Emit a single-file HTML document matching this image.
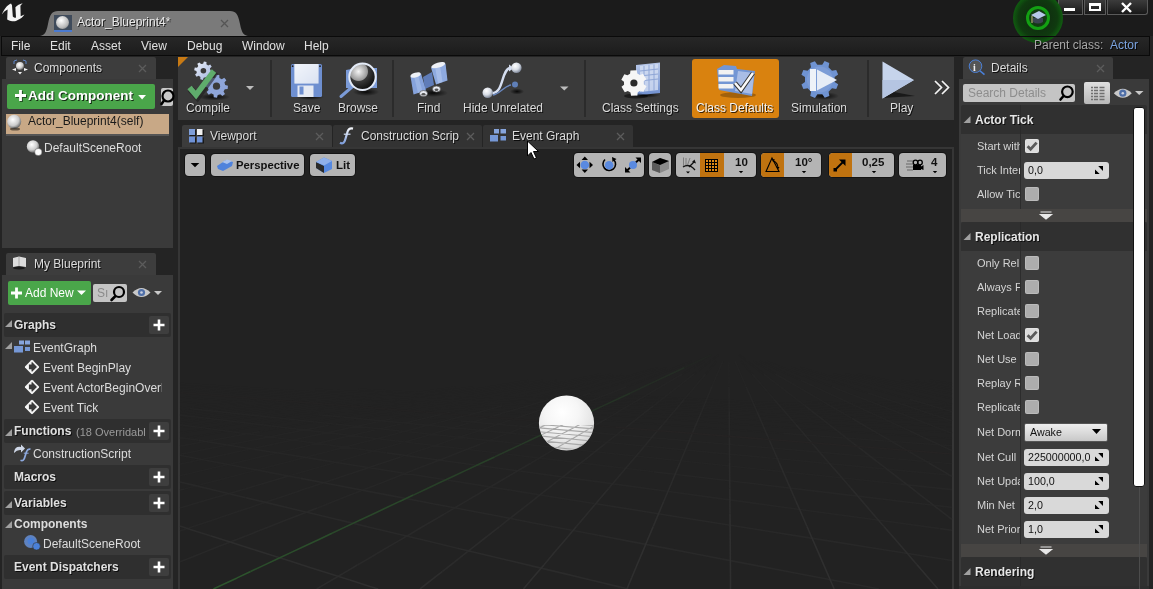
<!DOCTYPE html>
<html><head><meta charset="utf-8">
<style>
*{margin:0;padding:0;box-sizing:border-box}
html,body{width:1153px;height:589px;overflow:hidden;background:#242424;font-family:"Liberation Sans",sans-serif;font-size:12px;color:#d8d8d8}
.a{position:absolute}
.t{position:absolute;white-space:nowrap;line-height:14px;will-change:transform}
.sh{text-shadow:1px 1px 0 rgba(0,0,0,.75)}
b{font-weight:bold}
</style></head><body>
<div class="a" style="left:0px;top:0px;width:1153px;height:36px;background:#1b1b1b"></div>
<svg class="a" style="left:0px;top:0px;" width="28" height="26" viewBox="0 0 28 26"><path d="M1.8 14.6 C4 9.5 7 5 11 3.5 L12 5.2 L12.8 16.6 C13.6 17.8 15 17.9 16 17.4 L15.4 7.2 C17 5.6 19.8 4 22.6 3.3 L20.4 5.8 L20.7 16.3 L24.4 14.6 C22.5 17.5 20.5 19 17.8 20 C15.5 21.6 12.5 22.2 7.2 19.4 L7.6 9.4 C5.2 10.4 3.4 12.2 1.8 14.6Z" fill="#f4f4f4"/></svg>
<svg class="a" style="left:38px;top:10px;" width="212" height="27" viewBox="0 0 212 27"><path d="M0 26 C6 26 8 24 10 14 C12 4 14 1 20 1 L192 1 C198 1 200 4 202 14 C204 24 206 26 212 26 Z" fill="#7a7a7a"/></svg>
<div class="a" style="left:54px;top:15px;width:18px;height:17px;background:#3f4b5b;border-bottom:2px solid #4a7ad0"></div>
<div class="a" style="left:56px;top:16px;width:13px;height:13px;border-radius:50%;background:radial-gradient(circle at 40% 35%,#fff,#bbb 60%,#666)"></div>
<div class="t sh" style="left:77px;top:15px;color:#e8e8e8">Actor_Blueprint4*</div>
<svg class="a" style="left:220px;top:19px;" width="9" height="9" viewBox="0 0 9 9"><path d="M1 1 L8 8 M8 1 L1 8" stroke="#555" stroke-width="1.3"/></svg>
<div class="a" style="left:1058px;top:0px;width:25px;height:15px;background:linear-gradient(#3c3c3c,#181818);border:1px solid #5a5a5a;border-top:none;border-radius:0 0 0 3px"></div>
<div class="a" style="left:1064px;top:8px;width:11px;height:3px;background:#fff"></div>
<div class="a" style="left:1084px;top:0px;width:22px;height:15px;background:linear-gradient(#3c3c3c,#181818);border:1px solid #5a5a5a;border-top:none"></div>
<div class="a" style="left:1089px;top:3px;width:12px;height:8px;border:2px solid #fff;border-top-width:3px"></div>
<div class="a" style="left:1107px;top:0px;width:41px;height:15px;background:linear-gradient(#3c3c3c,#181818);border:1px solid #5a5a5a;border-top:none;border-radius:0 0 3px 0"></div>
<svg class="a" style="left:1120px;top:2px;" width="13" height="11" viewBox="0 0 13 11"><path d="M2 1 L11 10 M11 1 L2 10" stroke="#fff" stroke-width="2.4"/></svg>
<div class="a" style="left:1px;top:36px;width:1149px;height:20px;background:linear-gradient(#272727,#1c1c1c);border:1px solid #0a0a0a"></div>
<div class="t" style="left:11px;top:39px;color:#e0e0e0">File</div>
<div class="t" style="left:50px;top:39px;color:#e0e0e0">Edit</div>
<div class="t" style="left:91px;top:39px;color:#e0e0e0">Asset</div>
<div class="t" style="left:141px;top:39px;color:#e0e0e0">View</div>
<div class="t" style="left:187px;top:39px;color:#e0e0e0">Debug</div>
<div class="t" style="left:242px;top:39px;color:#e0e0e0">Window</div>
<div class="t" style="left:304px;top:39px;color:#e0e0e0">Help</div>
<div class="a" style="left:1013px;top:-7px;width:50px;height:50px;border-radius:50%;background:radial-gradient(circle,#102410 0,#0f3a0f 55%,#118a11 92%,#139813 100%)"></div>
<div class="a" style="left:1026px;top:6px;width:24px;height:24px;border-radius:50%;border:3px solid #13a013;background:radial-gradient(circle,#182818,#0f4a0f)"></div>
<svg class="a" style="left:1030px;top:9px;" width="17" height="17" viewBox="0 0 17 17"><path d="M3 9 L3 13 Q8 16 13 13 L13 9Z" fill="#3a4450"/><path d="M1 6 L9 2 L16 6 L8 10Z" fill="#b8c8ea"/><line x1="2" y1="7" x2="2" y2="14" stroke="#d8c090" stroke-width="1"/></svg>
<div class="a" style="left:1013px;top:36px;width:50px;height:1px;background:#0a0a0a"></div>
<div class="t sh" style="left:1034px;top:38px;color:#a8a8a8">Parent class:</div>
<div class="t sh" style="left:1110px;top:38px;color:#7aa3e0">Actor</div>
<div class="a" style="left:0px;top:56px;width:178px;height:533px;background:#242424"></div>
<div class="a" style="left:6px;top:57px;width:150px;height:23px;background:#3d3d3d;border-radius:2px 2px 0 0"></div>
<div class="a" style="left:2px;top:79px;width:171px;height:169px;background:#3a3a3a"></div>
<div class="t sh" style="left:34px;top:61px;color:#dcdcdc">Components</div>
<svg class="a" style="left:138px;top:64px;" width="9" height="9" viewBox="0 0 9 9"><path d="M1 1 L8 8 M8 1 L1 8" stroke="#5c5c5c" stroke-width="1.3"/></svg>
<div class="a" style="left:7px;top:84px;width:148px;height:25px;background:#4aa64a;border-radius:2px"></div>
<div class="t sh" style="left:28px;top:89px;color:#fff;font-weight:bold;font-size:13.5px">Add Component</div>
<div class="a" style="left:161px;top:88px;width:12px;height:18px;background:#c8c8c8;border-radius:2px"></div>
<div class="a" style="left:6px;top:114px;width:163px;height:20px;background:#c8a886"></div>
<div class="a" style="left:6px;top:134px;width:163px;height:2px;background:#555"></div>
<div class="t" style="left:28px;top:114px;color:#1a1a1a">Actor_Blueprint4(self)</div>
<div class="t" style="left:44px;top:141px;color:#dcdcdc">DefaultSceneRoot</div>
<div class="a" style="left:6px;top:253px;width:150px;height:23px;background:#3d3d3d;border-radius:2px 2px 0 0"></div>
<div class="a" style="left:2px;top:275px;width:171px;height:314px;background:#3a3a3a"></div>
<div class="t sh" style="left:34px;top:257px;color:#dcdcdc">My Blueprint</div>
<svg class="a" style="left:138px;top:260px;" width="9" height="9" viewBox="0 0 9 9"><path d="M1 1 L8 8 M8 1 L1 8" stroke="#5c5c5c" stroke-width="1.3"/></svg>
<div class="a" style="left:8px;top:281px;width:83px;height:24px;background:#4aa64a;border-radius:2px"></div>
<div class="t" style="left:25px;top:286px;color:#fff">Add New</div>
<div class="a" style="left:93px;top:284px;width:34px;height:18px;background:#c4c4c4;border-radius:2px"></div>
<div class="t" style="left:97px;top:286px;color:#8a8a8a">Sı</div>
<div class="a" style="left:4px;top:313px;width:167px;height:24px;background:#2f2f2f;border-radius:2px"></div>
<div class="t sh" style="left:14px;top:318px;color:#e0e0e0;font-weight:bold">Graphs</div>
<div class="a" style="left:149px;top:316px;width:20px;height:18px;background:#3e3e3e;border-radius:2px"></div>
<div class="t" style="left:33px;top:341px;color:#dcdcdc">EventGraph</div>
<div class="t" style="left:43px;top:361px;color:#dcdcdc">Event BeginPlay</div>
<div class="t" style="left:43px;top:381px;color:#dcdcdc;width:119px;overflow:hidden">Event ActorBeginOverlap</div>
<div class="t" style="left:43px;top:401px;color:#dcdcdc">Event Tick</div>
<div class="a" style="left:4px;top:419px;width:167px;height:24px;background:#2f2f2f;border-radius:2px"></div>
<div class="t sh" style="left:14px;top:424px;color:#e0e0e0;font-weight:bold">Functions</div>
<div class="a" style="left:149px;top:422px;width:20px;height:18px;background:#3e3e3e;border-radius:2px"></div>
<div class="t" style="left:76px;top:425px;color:#9a9a9a;font-size:11px;width:70px;overflow:hidden">(18 Overridable)</div>
<div class="t" style="left:33px;top:447px;color:#dcdcdc">ConstructionScript</div>
<div class="a" style="left:4px;top:465px;width:167px;height:24px;background:#2f2f2f;border-radius:2px"></div>
<div class="t sh" style="left:14px;top:470px;color:#e0e0e0;font-weight:bold">Macros</div>
<div class="a" style="left:149px;top:468px;width:20px;height:18px;background:#3e3e3e;border-radius:2px"></div>
<div class="a" style="left:4px;top:491px;width:167px;height:24px;background:#2f2f2f;border-radius:2px"></div>
<div class="t sh" style="left:14px;top:496px;color:#e0e0e0;font-weight:bold">Variables</div>
<div class="a" style="left:149px;top:494px;width:20px;height:18px;background:#3e3e3e;border-radius:2px"></div>
<div class="t" style="left:14px;top:517px;color:#dcdcdc;font-weight:bold">Components</div>
<div class="t" style="left:43px;top:537px;color:#dcdcdc">DefaultSceneRoot</div>
<div class="a" style="left:4px;top:555px;width:167px;height:24px;background:#2f2f2f;border-radius:2px"></div>
<div class="t sh" style="left:14px;top:560px;color:#e0e0e0;font-weight:bold">Event Dispatchers</div>
<div class="a" style="left:149px;top:558px;width:20px;height:18px;background:#3e3e3e;border-radius:2px"></div>
<div class="a" style="left:173px;top:56px;width:787px;height:533px;background:#242424"></div>
<div class="a" style="left:178px;top:57px;width:776px;height:63px;background:#3a3a3a"></div>
<svg class="a" style="left:178px;top:57px;" width="11" height="11" viewBox="0 0 11 11"><path d="M0 0 L10 0 L0 10Z" fill="#c87a14"/></svg>
<div class="a" style="left:270px;top:60px;width:2px;height:57px;background:#2b2b2b"></div>
<div class="a" style="left:392px;top:60px;width:2px;height:57px;background:#2b2b2b"></div>
<div class="a" style="left:584px;top:60px;width:2px;height:57px;background:#2b2b2b"></div>
<div class="a" style="left:867px;top:60px;width:2px;height:57px;background:#2b2b2b"></div>
<div class="a" style="left:692px;top:59px;width:87px;height:59px;background:#d9820f;border-radius:3px"></div>
<div class="t sh" style="left:186px;top:101px;color:#dcdcdc">Compile</div>
<div class="t sh" style="left:293px;top:101px;color:#dcdcdc">Save</div>
<div class="t sh" style="left:338px;top:101px;color:#dcdcdc">Browse</div>
<div class="t sh" style="left:417px;top:101px;color:#dcdcdc">Find</div>
<div class="t sh" style="left:463px;top:101px;color:#dcdcdc">Hide Unrelated</div>
<div class="t sh" style="left:602px;top:101px;color:#dcdcdc">Class Settings</div>
<div class="t sh" style="left:696px;top:101px;color:#f4f4f4">Class Defaults</div>
<div class="t sh" style="left:791px;top:101px;color:#dcdcdc">Simulation</div>
<div class="t sh" style="left:890px;top:101px;color:#dcdcdc">Play</div>
<div class="a" style="left:182px;top:125px;width:150px;height:22px;background:#3c3c3c;border-radius:2px 2px 0 0"></div>
<div class="a" style="left:333px;top:125px;width:149px;height:22px;background:#333333;border-radius:2px 2px 0 0"></div>
<div class="a" style="left:483px;top:125px;width:150px;height:22px;background:#333333;border-radius:2px 2px 0 0"></div>
<div class="t sh" style="left:210px;top:129px;color:#dcdcdc">Viewport</div>
<svg class="a" style="left:315px;top:132px;" width="9" height="9" viewBox="0 0 9 9"><path d="M1 1 L8 8 M8 1 L1 8" stroke="#5c5c5c" stroke-width="1.3"/></svg>
<div class="t sh" style="left:361px;top:129px;color:#dcdcdc">Construction Scrip</div>
<svg class="a" style="left:466px;top:132px;" width="9" height="9" viewBox="0 0 9 9"><path d="M1 1 L8 8 M8 1 L1 8" stroke="#5c5c5c" stroke-width="1.3"/></svg>
<div class="t sh" style="left:512px;top:129px;color:#dcdcdc">Event Graph</div>
<svg class="a" style="left:616px;top:132px;" width="9" height="9" viewBox="0 0 9 9"><path d="M1 1 L8 8 M8 1 L1 8" stroke="#5c5c5c" stroke-width="1.3"/></svg>
<div class="a" style="left:178px;top:147px;width:776px;height:442px;background:#363636"></div>
<div class="a" style="left:180px;top:149px;width:772px;height:440px;background:#222222"></div>
<svg class="a" style="left:0;top:0" width="1153" height="589"><defs><clipPath id="sc"><path d="M537.9 425 L595.1 425 L595.1 451.6 L537.9 451.6Z"/></clipPath><clipPath id="sc2"><circle cx="566.5" cy="423" r="27.1"/></clipPath><radialGradient id="gsp" cx="0.42" cy="0.3" r="0.75"><stop offset="0" stop-color="#ffffff"/><stop offset="0.4" stop-color="#f6f6f6"/><stop offset="0.8" stop-color="#e2e2e2"/><stop offset="1" stop-color="#cfcfcf"/></radialGradient></defs><g fill="none" stroke-width="1.6"><path d="M180.0 408.5L199.5 406.3M199.5 406.3L256.5 399.9M180.0 411.5L224.7 406.3M224.7 406.3L279.0 399.8M180.0 414.9L198.3 412.6M198.3 412.6L249.9 406.2M249.9 406.2L301.5 399.8M301.5 399.8L353.2 393.4M180.0 418.7L226.2 412.6M226.2 412.6L275.1 406.2M275.1 406.2L324.0 399.8M324.0 399.8L372.9 393.4M180.0 422.9L207.9 419.0M207.9 419.0L254.1 412.6M254.1 412.6L300.3 406.2M300.3 406.2L346.5 399.8M346.5 399.8L392.7 393.4M180.0 427.6L195.1 425.4M195.1 425.4L238.6 419.0M238.6 419.0L282.1 412.6M282.1 412.6L325.5 406.2M325.5 406.2L369.0 399.8M369.0 399.8L412.5 393.4M412.5 393.4L456.0 387.0M180.0 432.9L187.7 431.7M187.7 431.7L228.5 425.3M228.5 425.3L269.3 418.9M269.3 418.9L310.0 412.5M310.0 412.5L350.8 406.1M350.8 406.1L391.5 399.7M391.5 399.7L432.3 393.3M432.3 393.3L473.0 386.9M185.8 438.1L223.8 431.7M223.8 431.7L261.9 425.3M261.9 425.3L299.9 418.9M299.9 418.9L337.9 412.5M337.9 412.5L376.0 406.1M376.0 406.1L414.0 399.7M414.0 399.7L452.0 393.3M452.0 393.3L490.1 386.9M490.1 386.9L528.1 380.5M259.9 431.6L295.3 425.3M295.3 425.3L330.6 418.9M330.6 418.9L365.9 412.5M365.9 412.5L401.2 406.1M401.2 406.1L436.5 399.7M436.5 399.7L471.8 393.3M471.8 393.3L507.1 386.9M507.1 386.9L542.5 380.5M328.6 425.2L361.2 418.8M361.2 418.8L393.8 412.5M393.8 412.5L426.4 406.1M426.4 406.1L459.0 399.7M459.0 399.7L491.6 393.3M491.6 393.3L524.2 386.9M524.2 386.9L556.8 380.5M391.9 418.8L421.8 412.4M421.8 412.4L451.6 406.0M451.6 406.0L481.5 399.7M481.5 399.7L511.4 393.3M511.4 393.3L541.3 386.9M541.3 386.9L571.1 380.5M571.1 380.5L601.0 374.1M449.7 412.4L476.9 406.0M476.9 406.0L504.0 399.6M504.0 399.6L531.2 393.2M531.2 393.2L558.3 386.9M558.3 386.9L585.5 380.5M585.5 380.5L612.6 374.1M502.1 406.0L526.5 399.6M526.5 399.6L551.0 393.2M551.0 393.2L575.4 386.9M575.4 386.9L599.8 380.5M599.8 380.5L624.3 374.1M549.0 399.6L570.7 393.2M570.7 393.2L592.5 386.8M592.5 386.8L614.2 380.5M614.2 380.5L635.9 374.1M635.9 374.1L657.6 367.7M180.0 407.6L189.9 408.6M590.5 393.2L609.5 386.8M609.5 386.8L628.5 380.4M628.5 380.4L647.5 374.1M647.5 374.1L666.5 367.7M180.0 401.6L187.1 402.3M187.1 402.3L252.9 408.6M252.9 408.6L318.6 414.8M626.6 386.8L642.9 380.4M642.9 380.4L659.1 374.1M659.1 374.1L675.4 367.7M675.4 367.7L691.7 361.3M180.0 396.7L243.6 402.2M243.6 402.2L315.8 408.5M315.8 408.5L388.1 414.8M388.1 414.8L460.4 421.0M682.4 374.0L693.2 367.7M693.2 367.7L704.1 361.3M180.0 389.1L185.5 389.5M185.5 389.5L270.9 395.8M270.9 395.8L356.3 402.1M356.3 402.1L441.7 408.3M441.7 408.3L527.0 414.6M527.0 414.6L612.4 420.9M612.4 420.9L697.8 427.1M697.8 427.1L783.1 433.4M694.0 374.0L702.1 367.7M702.1 367.7L710.2 361.3M710.2 361.3L718.4 354.9M180.0 386.1L228.8 389.5M228.8 389.5L320.7 395.7M320.7 395.7L412.6 402.0M412.6 402.0L504.5 408.2M504.5 408.2L596.4 414.5M596.4 414.5L688.3 420.8M688.3 420.8L780.3 427.0M780.3 427.0L872.2 433.3M872.2 433.3L952.0 438.7M705.7 374.0L716.4 361.3M180.0 383.6L272.0 389.4M272.0 389.4L370.4 395.7M370.4 395.7L468.9 401.9M468.9 401.9L567.3 408.2M567.3 408.2L665.8 414.4M665.8 414.4L764.3 420.7M764.3 420.7L862.7 426.9M862.7 426.9L952.0 432.6M315.2 389.4L420.2 395.6M420.2 395.6L525.2 401.8M525.2 401.8L630.2 408.1M630.2 408.1L735.1 414.3M735.1 414.3L840.1 420.6M840.1 420.6L945.1 426.8M945.1 426.8L952.0 427.2M358.3 389.3L469.8 395.5M469.8 395.5L581.4 401.8M581.4 401.8L692.9 408.0M692.9 408.0L804.5 414.3M804.5 414.3L916.0 420.5M916.0 420.5L952.0 422.5M519.5 395.5L637.6 401.7M637.6 401.7L755.7 407.9M755.7 407.9L873.8 414.2M873.8 414.2L952.0 418.3M752.2 374.0L741.2 361.3M569.1 395.4L693.8 401.6M693.8 401.6L818.4 407.9M818.4 407.9L943.0 414.1M943.0 414.1L952.0 414.5M763.8 374.0L755.6 367.6M755.6 367.6L747.4 361.3M747.4 361.3L739.2 354.9M618.7 395.3L749.9 401.6M749.9 401.6L881.1 407.8M881.1 407.8L952.0 411.2M775.5 374.0L764.5 367.6M764.5 367.6L753.6 361.3M806.0 401.5L943.7 407.7M943.7 407.7L952.0 408.1M800.7 380.3L787.1 373.9M787.1 373.9L773.5 367.6M773.5 367.6L759.8 361.3M862.1 401.4L952.0 405.3M831.5 386.6L815.1 380.3M815.1 380.3L798.7 373.9M798.7 373.9L782.4 367.6M782.4 367.6L766.0 361.3M867.6 392.9L848.6 386.6M848.6 386.6L829.5 380.3M829.5 380.3L810.4 373.9M810.4 373.9L791.3 367.6M909.3 399.3L887.4 392.9M887.4 392.9L865.6 386.6M865.6 386.6L843.8 380.3M843.8 380.3L822.0 373.9M822.0 373.9L800.2 367.6M952.0 404.5L931.8 399.2M931.8 399.2L907.2 392.9M907.2 392.9L882.7 386.6M882.7 386.6L858.2 380.2M858.2 380.2L833.7 373.9M952.0 398.7L927.1 392.9M927.1 392.9L899.8 386.6M899.8 386.6L872.6 380.2M872.6 380.2L845.3 373.9M952.0 394.0L946.9 392.9M946.9 392.9L916.9 386.5M916.9 386.5L886.9 380.2M886.9 380.2L857.0 373.9M952.0 390.0L934.0 386.5M934.0 386.5L901.3 380.2M952.0 386.7L951.1 386.5M951.1 386.5L915.7 380.2M952.0 383.8L930.0 380.2" stroke="#222222"/><path d="M180.0 439.1L185.8 438.1M180.0 446.1L189.3 444.4M189.3 444.4L224.6 438.0M224.6 438.0L259.9 431.6M180.0 454.4L198.3 450.8M198.3 450.8L230.9 444.4M230.9 444.4L263.5 438.0M263.5 438.0L296.0 431.6M296.0 431.6L328.6 425.2M180.0 464.1L182.8 463.5M182.8 463.5L212.7 457.1M212.7 457.1L242.5 450.7M242.5 450.7L272.4 444.4M272.4 444.4L302.3 438.0M302.3 438.0L332.2 431.6M332.2 431.6L362.0 425.2M362.0 425.2L391.9 418.8M180.0 437.4L198.6 440.4M180.0 475.8L205.3 469.8M205.3 469.8L232.5 463.5M232.5 463.5L259.6 457.1M259.6 457.1L286.8 450.7M286.8 450.7L314.0 444.3M314.0 444.3L341.1 437.9M341.1 437.9L368.3 431.5M368.3 431.5L395.4 425.2M395.4 425.2L422.6 418.8M422.6 418.8L449.7 412.4M180.0 424.7L202.2 427.7M202.2 427.7L248.3 434.0M248.3 434.0L294.4 440.3M294.4 440.3L340.5 446.6M340.5 446.6L386.7 452.9M184.5 488.9L208.9 482.6M208.9 482.6L233.3 476.2M233.3 476.2L257.8 469.8M257.8 469.8L282.2 463.4M282.2 463.4L306.6 457.0M306.6 457.0L331.1 450.7M331.1 450.7L355.5 444.3M355.5 444.3L379.9 437.9M379.9 437.9L404.4 431.5M404.4 431.5L428.8 425.1M428.8 425.1L453.2 418.8M453.2 418.8L477.7 412.4M477.7 412.4L502.1 406.0M180.0 415.1L232.2 421.3M232.2 421.3L284.9 427.6M284.9 427.6L337.5 433.9M337.5 433.9L390.2 440.2M390.2 440.2L442.8 446.5M442.8 446.5L495.5 452.8M495.5 452.8L548.2 459.1M548.2 459.1L600.8 465.4M600.8 465.4L653.5 471.7M288.5 476.1L310.2 469.7M310.2 469.7L331.9 463.4M331.9 463.4L353.6 457.0M353.6 457.0L375.3 450.6M375.3 450.6L397.0 444.2M397.0 444.2L418.8 437.9M418.8 437.9L440.5 431.5M440.5 431.5L462.2 425.1M462.2 425.1L483.9 418.7M483.9 418.7L505.6 412.3M505.6 412.3L527.3 406.0M527.3 406.0L549.0 399.6M189.9 408.6L249.1 414.9M249.1 414.9L308.3 421.2M308.3 421.2L367.5 427.5M367.5 427.5L426.7 433.8M426.7 433.8L485.9 440.1M485.9 440.1L545.1 446.4M545.1 446.4L604.3 452.7M604.3 452.7L663.5 459.0M663.5 459.0L722.7 465.3M722.7 465.3L781.9 471.6M781.9 471.6L841.1 477.8M841.1 477.8L900.3 484.1M400.6 456.9L419.6 450.6M419.6 450.6L438.6 444.2M438.6 444.2L457.6 437.8M457.6 437.8L476.6 431.4M476.6 431.4L495.6 425.1M495.6 425.1L514.6 418.7M514.6 418.7L533.6 412.3M533.6 412.3L552.5 405.9M552.5 405.9L571.5 399.6M571.5 399.6L590.5 393.2M318.6 414.8L384.4 421.1M384.4 421.1L450.1 427.4M450.1 427.4L515.9 433.7M515.9 433.7L581.6 440.0M581.6 440.0L647.3 446.3M647.3 446.3L713.1 452.6M713.1 452.6L778.8 458.8M778.8 458.8L844.6 465.1M844.6 465.1L910.3 471.4M910.3 471.4L952.0 475.4M480.1 444.2L496.4 437.8M496.4 437.8L512.7 431.4M512.7 431.4L529.0 425.0M529.0 425.0L545.2 418.7M545.2 418.7L561.5 412.3M561.5 412.3L577.8 405.9M577.8 405.9L594.0 399.5M594.0 399.5L610.3 393.2M610.3 393.2L626.6 386.8M460.4 421.0L532.7 427.3M532.7 427.3L605.0 433.6M605.0 433.6L677.3 439.9M677.3 439.9L749.6 446.2M749.6 446.2L821.8 452.4M821.8 452.4L894.1 458.7M894.1 458.7L952.0 463.7M606.6 418.6L617.4 412.2M617.4 412.2L628.2 405.9M628.2 405.9L639.1 399.5M639.1 399.5L649.9 393.1M649.9 393.1L660.7 386.8M660.7 386.8L671.6 380.4M671.6 380.4L682.4 374.0M783.1 433.4L868.5 439.7M868.5 439.7L952.0 445.8M653.5 405.9L661.6 399.5M661.6 399.5L669.7 393.1M669.7 393.1L677.8 386.8M677.8 386.8L685.9 380.4M685.9 380.4L694.0 374.0M684.1 399.5L694.9 386.7M694.9 386.7L705.7 374.0M711.9 386.7L717.3 374.0M717.3 374.0L722.6 361.3M729.0 386.7L728.9 374.0M728.9 374.0L728.8 361.3M746.1 386.7L740.6 374.0M740.6 374.0L735.0 361.3M774.1 399.4L763.2 386.7M763.2 386.7L752.2 374.0M804.9 405.7L796.7 399.4M796.7 399.4L788.4 393.0M788.4 393.0L780.2 386.7M780.2 386.7L772.0 380.3M772.0 380.3L763.8 374.0M852.0 418.4L841.0 412.0M841.0 412.0L830.1 405.7M830.1 405.7L819.2 399.3M819.2 399.3L808.2 393.0M808.2 393.0L797.3 386.6M797.3 386.6L786.4 380.3M786.4 380.3L775.5 374.0M909.9 431.0L896.3 424.7M896.3 424.7L882.6 418.3M882.6 418.3L869.0 412.0M869.0 412.0L855.3 405.7M855.3 405.7L841.7 399.3M841.7 399.3L828.0 393.0M828.0 393.0L814.4 386.6M814.4 386.6L800.7 380.3M952.0 433.3L946.1 431.0M946.1 431.0L929.7 424.7M929.7 424.7L913.3 418.3M913.3 418.3L896.9 412.0M896.9 412.0L880.6 405.6M880.6 405.6L864.2 399.3M864.2 399.3L847.8 393.0M847.8 393.0L831.5 386.6M952.0 420.9L944.0 418.3M944.0 418.3L924.9 412.0M924.9 412.0L905.8 405.6M905.8 405.6L886.7 399.3M886.7 399.3L867.6 392.9M952.0 411.7L931.1 405.6M931.1 405.6L909.3 399.3" stroke="#242424"/><path d="M180.0 455.3L201.9 459.5M201.9 459.5L234.9 465.8M234.9 465.8L268.0 472.1M268.0 472.1L301.0 478.4M198.6 440.4L238.2 446.7M238.2 446.7L277.8 453.0M277.8 453.0L317.4 459.4M317.4 459.4L356.9 465.7M356.9 465.7L396.5 472.0M396.5 472.0L436.1 478.3M436.1 478.3L475.7 484.6M475.7 484.6L515.2 490.9M515.2 490.9L554.8 497.2M554.8 497.2L594.4 503.5M386.7 452.9L432.8 459.2M432.8 459.2L478.9 465.5M478.9 465.5L525.0 471.8M525.0 471.8L571.1 478.1M571.1 478.1L617.2 484.4M617.2 484.4L663.4 490.8M663.4 490.8L709.5 497.1M709.5 497.1L755.6 503.4M755.6 503.4L801.7 509.7M801.7 509.7L847.8 516.0M847.8 516.0L893.9 522.3M893.9 522.3L940.0 528.6M180.0 490.1L184.5 488.9M653.5 471.7L706.1 478.0M706.1 478.0L758.8 484.3M758.8 484.3L811.4 490.6M811.4 490.6L864.1 496.9M864.1 496.9L916.8 503.2M916.8 503.2L952.0 507.4M180.0 508.0L201.6 501.6M201.6 501.6L223.3 495.3M223.3 495.3L245.1 488.9M245.1 488.9L266.8 482.5M266.8 482.5L288.5 476.1M900.3 484.1L952.0 489.6M180.0 531.0L191.7 527.1M191.7 527.1L210.7 520.7M210.7 520.7L229.7 514.3M229.7 514.3L248.7 507.9M248.7 507.9L267.7 501.6M267.7 501.6L286.7 495.2M286.7 495.2L305.6 488.8M305.6 488.8L324.6 482.4M324.6 482.4L343.6 476.1M343.6 476.1L362.6 469.7M362.6 469.7L381.6 463.3M381.6 463.3L400.6 456.9M317.4 507.9L333.7 501.5M333.7 501.5L350.0 495.1M350.0 495.1L366.2 488.8M366.2 488.8L382.5 482.4M382.5 482.4L398.8 476.0M398.8 476.0L415.0 469.6M415.0 469.6L431.3 463.3M431.3 463.3L447.6 456.9M447.6 456.9L463.9 450.5M463.9 450.5L480.1 444.2M530.7 463.2L541.6 456.8M541.6 456.8L552.4 450.4M552.4 450.4L563.2 444.1M563.2 444.1L574.1 437.7M574.1 437.7L584.9 431.3M584.9 431.3L595.7 425.0M595.7 425.0L606.6 418.6M604.8 444.0L612.9 437.7M612.9 437.7L621.0 431.3M621.0 431.3L629.1 424.9M629.1 424.9L637.2 418.6M637.2 418.6L645.3 412.2M645.3 412.2L653.5 405.9M662.5 424.9L673.3 412.2M673.3 412.2L684.1 399.5M701.3 412.2L706.6 399.4M706.6 399.4L711.9 386.7M729.2 412.1L729.1 399.4M729.1 399.4L729.0 386.7M757.2 412.1L751.6 399.4M751.6 399.4L746.1 386.7M796.1 424.8L785.1 412.1M785.1 412.1L774.1 399.4M854.1 443.8L845.9 437.5M845.9 437.5L837.7 431.1M837.7 431.1L829.5 424.8M829.5 424.8L821.3 418.4M821.3 418.4L813.1 412.1M813.1 412.1L804.9 405.7M928.5 462.8L917.5 456.5M917.5 456.5L906.6 450.1M906.6 450.1L895.7 443.8M895.7 443.8L884.7 437.4M884.7 437.4L873.8 431.1M873.8 431.1L862.9 424.7M862.9 424.7L852.0 418.4M952.0 450.6L950.9 450.1M950.9 450.1L937.2 443.7M937.2 443.7L923.6 437.4M923.6 437.4L909.9 431.0" stroke="#262626"/><path d="M180.0 482.0L192.4 484.9M192.4 484.9L218.9 491.2M218.9 491.2L245.4 497.6M301.0 478.4L334.0 484.8M334.0 484.8L367.1 491.1M367.1 491.1L400.1 497.4M400.1 497.4L433.1 503.7M433.1 503.7L466.2 510.0M466.2 510.0L499.2 516.3M499.2 516.3L532.2 522.7M532.2 522.7L565.3 529.0M565.3 529.0L598.3 535.3M594.4 503.5L633.9 509.8M633.9 509.8L673.5 516.2M673.5 516.2L713.1 522.5M713.1 522.5L752.7 528.8M752.7 528.8L792.2 535.1M792.2 535.1L831.8 541.4M831.8 541.4L871.4 547.7M871.4 547.7L911.0 554.0M911.0 554.0L950.5 560.3M950.5 560.3L952.0 560.6M940.0 528.6L952.0 530.2M180.0 561.7L187.2 558.9M187.2 558.9L203.5 552.5M203.5 552.5L219.8 546.1M219.8 546.1L236.1 539.7M236.1 539.7L252.3 533.4M252.3 533.4L268.6 527.0M268.6 527.0L284.9 520.6M284.9 520.6L301.1 514.2M301.1 514.2L317.4 507.9M444.1 514.1L454.9 507.7M454.9 507.7L465.7 501.4M465.7 501.4L476.6 495.0M476.6 495.0L487.4 488.6M487.4 488.6L498.2 482.3M498.2 482.3L509.1 475.9M509.1 475.9L519.9 469.5M519.9 469.5L530.7 463.2M556.1 482.2L564.2 475.9M564.2 475.9L572.3 469.5M572.3 469.5L580.5 463.1M580.5 463.1L588.6 456.8M588.6 456.8L596.7 450.4M596.7 450.4L604.8 444.0M630.2 463.1L640.9 450.4M640.9 450.4L651.7 437.6M651.7 437.6L662.5 424.9M690.6 437.6L695.9 424.9M695.9 424.9L701.3 412.2M729.4 437.6L729.3 424.8M729.3 424.8L729.2 412.1M768.2 437.5L762.7 424.8M762.7 424.8L757.2 412.1M829.0 462.9L818.0 450.2M818.0 450.2L807.1 437.5M807.1 437.5L796.1 424.8M903.4 481.9L895.2 475.5M895.2 475.5L886.9 469.2M886.9 469.2L878.7 462.8M878.7 462.8L870.5 456.5M870.5 456.5L862.3 450.1M862.3 450.1L854.1 443.8M952.0 476.5L950.3 475.5M950.3 475.5L939.4 469.1M939.4 469.1L928.5 462.8" stroke="#282828"/><path d="M245.4 497.6L271.9 503.9M271.9 503.9L298.4 510.2M298.4 510.2L324.8 516.5M324.8 516.5L351.3 522.9M351.3 522.9L377.8 529.2M377.8 529.2L404.3 535.5M404.3 535.5L430.8 541.8M430.8 541.8L457.3 548.2M598.3 535.3L631.3 541.6M631.3 541.6L664.4 547.9M664.4 547.9L697.4 554.3M697.4 554.3L730.4 560.6M730.4 560.6L763.4 566.9M763.4 566.9L796.5 573.2M796.5 573.2L829.5 579.5M829.5 579.5L862.5 585.8M862.5 585.8L879.1 589.0M357.4 565.0L368.3 558.7M368.3 558.7L379.1 552.3M379.1 552.3L389.9 545.9M389.9 545.9L400.8 539.6M400.8 539.6L411.6 533.2M411.6 533.2L422.4 526.8M422.4 526.8L433.3 520.5M433.3 520.5L444.1 514.1M499.3 526.8L507.4 520.4M507.4 520.4L515.6 514.0M515.6 514.0L523.7 507.7M523.7 507.7L531.8 501.3M531.8 501.3L539.9 494.9M539.9 494.9L548.0 488.6M548.0 488.6L556.1 482.2M608.6 488.5L619.4 475.8M619.4 475.8L630.2 463.1M679.9 463.0L685.2 450.3M685.2 450.3L690.6 437.6M729.6 463.0L729.5 450.3M729.5 450.3L729.4 437.6M779.3 462.9L773.8 450.2M773.8 450.2L768.2 437.5M851.0 488.3L840.0 475.6M840.0 475.6L829.0 462.9M952.0 519.5L944.4 513.6M944.4 513.6L936.2 507.3M936.2 507.3L928.0 500.9M928.0 500.9L919.8 494.6M919.8 494.6L911.6 488.2M911.6 488.2L903.4 481.9" stroke="#292929"/><path d="M180.0 526.1L190.3 529.4M190.3 529.4L210.3 535.7M457.3 548.2L483.8 554.5M483.8 554.5L510.3 560.8M510.3 560.8L536.8 567.1M536.8 567.1L563.2 573.4M563.2 573.4L589.7 579.8M589.7 579.8L616.2 586.1M616.2 586.1L628.4 589.0M316.7 589.0L324.9 584.1M324.9 584.1L335.8 577.8M335.8 577.8L346.6 571.4M346.6 571.4L357.4 565.0M442.5 571.3L450.7 565.0M450.7 565.0L458.8 558.6M458.8 558.6L466.9 552.2M466.9 552.2L475.0 545.9M475.0 545.9L483.1 539.5M483.1 539.5L491.2 533.1M491.2 533.1L499.3 526.8M576.2 526.7L587.0 514.0M587.0 514.0L597.8 501.3M597.8 501.3L608.6 488.5M663.8 501.2L669.2 488.5M669.2 488.5L674.5 475.8M674.5 475.8L679.9 463.0M729.8 488.4L729.7 475.7M729.7 475.7L729.6 463.0M795.9 501.1L790.4 488.4M790.4 488.4L784.8 475.6M784.8 475.6L779.3 462.9M883.9 526.4L872.9 513.7M872.9 513.7L862.0 501.0M862.0 501.0L851.0 488.3" stroke="#2b2b2b"/><path d="M210.3 535.7L230.2 542.0M230.2 542.0L250.2 548.4M250.2 548.4L270.1 554.7M270.1 554.7L290.1 561.0M290.1 561.0L310.0 567.4M310.0 567.4L330.0 573.7M330.0 573.7L349.9 580.0M420.0 589.0L426.3 584.0M426.3 584.0L434.4 577.7M434.4 577.7L442.5 571.3M543.9 564.9L554.7 552.1M554.7 552.1L565.5 539.4M565.5 539.4L576.2 526.7M653.2 526.6L658.5 513.9M658.5 513.9L663.8 501.2M730.0 513.8L729.9 501.1M729.9 501.1L729.8 488.4M807.0 526.5L801.5 513.8M801.5 513.8L795.9 501.1M916.8 564.5L905.9 551.8M905.9 551.8L894.9 539.1M894.9 539.1L883.9 526.4" stroke="#2d2d2d"/><path d="M349.9 580.0L369.9 586.4M369.9 586.4L378.2 589.0M523.4 589.0L533.1 577.6M533.1 577.6L543.9 564.9M626.9 589.0L631.8 577.5M631.8 577.5L637.1 564.8M637.1 564.8L642.5 552.1M642.5 552.1L647.8 539.3M647.8 539.3L653.2 526.6M730.5 589.0L730.5 577.4M730.5 577.4L730.4 564.7M730.4 564.7L730.3 552.0M730.3 552.0L730.2 539.3M730.2 539.3L730.1 526.5M730.1 526.5L730.0 513.8M834.2 589.0L829.1 577.3M829.1 577.3L823.6 564.6M823.6 564.6L818.1 551.9M818.1 551.9L812.5 539.2M812.5 539.2L807.0 526.5M938.0 589.0L927.8 577.2M927.8 577.2L916.8 564.5" stroke="#2f2f2f"/><path d="M180.0 392.6L221.1 395.9M221.1 395.9L299.9 402.1M299.9 402.1L378.8 408.4M378.8 408.4L457.6 414.7M457.6 414.7L536.4 420.9M536.4 420.9L615.2 427.2" stroke="#232222"/><path d="M615.2 427.2L694.1 433.5M694.1 433.5L772.9 439.8M772.9 439.8L851.7 446.0M851.7 446.0L930.6 452.3M930.6 452.3L952.0 454.0" stroke="#252323"/><path d="M684.3 367.7L697.9 361.3M697.9 361.3L711.4 354.9" stroke="#222522"/><path d="M630.1 393.2L643.7 386.8M643.7 386.8L657.2 380.4M657.2 380.4L670.8 374.0M670.8 374.0L684.3 367.7" stroke="#242c24"/><path d="M562.3 425.0L575.9 418.6M575.9 418.6L589.4 412.3M589.4 412.3L603.0 405.9M603.0 405.9L616.6 399.5M616.6 399.5L630.1 393.2" stroke="#253225"/><path d="M494.6 456.9L508.1 450.5M508.1 450.5L521.7 444.1M521.7 444.1L535.2 437.7M535.2 437.7L548.8 431.4M548.8 431.4L562.3 425.0" stroke="#273927"/><path d="M413.3 495.1L426.8 488.7M426.8 488.7L440.4 482.3M440.4 482.3L453.9 476.0M453.9 476.0L467.5 469.6M467.5 469.6L481.0 463.2M481.0 463.2L494.6 456.9" stroke="#284028"/><path d="M332.0 533.3L345.5 526.9M345.5 526.9L359.1 520.5M359.1 520.5L372.6 514.2M372.6 514.2L386.2 507.8M386.2 507.8L399.7 501.4M399.7 501.4L413.3 495.1" stroke="#2a472a"/><path d="M250.6 571.5L264.2 565.1M264.2 565.1L277.7 558.8M277.7 558.8L291.3 552.4M291.3 552.4L304.9 546.0M304.9 546.0L318.4 539.7M318.4 539.7L332.0 533.3" stroke="#2b4d2b"/><path d="M213.4 589.0L223.5 584.2M223.5 584.2L237.1 577.9M237.1 577.9L250.6 571.5" stroke="#2d542d"/></g><circle cx="566.5" cy="423" r="27.6" fill="url(#gsp)"/><g clip-path="url(#sc)"><g clip-path="url(#sc2)"><path d="M536.9 451.3L548.7 452.6M536.9 445.5L596.1 451.8M536.9 440.4L596.1 446.3M536.9 435.7L596.1 441.4M536.9 431.5L596.1 436.9M536.9 427.7L596.1 432.8M536.9 428.8L548.0 424.0M536.9 424.2L596.1 429.1M536.9 437.0L564.5 424.0M574.8 424.0L596.1 425.7M536.9 447.0L580.9 424.0M548.7 452.6L596.1 424.8M571.3 452.6L596.1 435.9M593.9 452.6L596.1 450.9" fill="none" stroke="#a9a9a9" stroke-width="1.1"/></g></g></svg>
<div class="a" style="left:185px;top:154px;width:20px;height:22px;background:#b4b4b4;border-radius:4px;box-shadow:0 0 0 1px #141414;"></div>
<div class="a" style="left:211px;top:154px;width:93px;height:22px;background:#b4b4b4;border-radius:4px;box-shadow:0 0 0 1px #141414;"></div>
<div class="t" style="left:236px;top:158px;color:#111;font-weight:bold;font-size:11.3px">Perspective</div>
<div class="a" style="left:310px;top:154px;width:45px;height:22px;background:#b4b4b4;border-radius:4px;box-shadow:0 0 0 1px #141414;"></div>
<div class="t" style="left:336px;top:158px;color:#111;font-weight:bold;font-size:11.5px">Lit</div>
<div class="a" style="left:574px;top:153px;width:70px;height:24px;background:#b4b4b4;border-radius:4px;box-shadow:0 0 0 1px #141414;"></div>
<div class="a" style="left:649px;top:153px;width:22px;height:24px;background:#b4b4b4;border-radius:4px;box-shadow:0 0 0 1px #141414;"></div>
<div class="a" style="left:676px;top:153px;width:80px;height:24px;background:#b4b4b4;border-radius:4px;box-shadow:0 0 0 1px #141414;overflow:hidden"></div>
<div class="a" style="left:700px;top:153px;width:24px;height:24px;background:#c07310"></div>
<div class="t" style="left:735px;top:155px;color:#111;font-weight:bold;font-size:11.5px">10</div>
<div class="a" style="left:761px;top:153px;width:60px;height:24px;background:#b4b4b4;border-radius:4px;box-shadow:0 0 0 1px #141414;"></div>
<div class="a" style="left:761px;top:153px;width:23px;height:24px;background:#c07310;border-radius:4px 0 0 4px"></div>
<div class="t" style="left:795px;top:155px;color:#111;font-weight:bold;font-size:11.5px">10°</div>
<div class="a" style="left:829px;top:153px;width:65px;height:24px;background:#b4b4b4;border-radius:4px;box-shadow:0 0 0 1px #141414;"></div>
<div class="a" style="left:829px;top:153px;width:23px;height:24px;background:#c07310;border-radius:4px 0 0 4px"></div>
<div class="t" style="left:862px;top:155px;color:#111;font-weight:bold;font-size:11.5px">0,25</div>
<div class="a" style="left:899px;top:153px;width:47px;height:24px;background:#b4b4b4;border-radius:4px;box-shadow:0 0 0 1px #141414;"></div>
<div class="t" style="left:931px;top:155px;color:#111;font-weight:bold;font-size:11.5px">4</div>
<div class="a" style="left:954px;top:56px;width:199px;height:533px;background:#242424"></div>
<div class="a" style="left:963px;top:57px;width:150px;height:22px;background:#3d3d3d;border-radius:2px 2px 0 0"></div>
<div class="t sh" style="left:991px;top:61px;color:#dcdcdc">Details</div>
<svg class="a" style="left:1096px;top:64px;" width="9" height="9" viewBox="0 0 9 9"><path d="M1 1 L8 8 M8 1 L1 8" stroke="#5c5c5c" stroke-width="1.3"/></svg>
<div class="a" style="left:959px;top:79px;width:190px;height:510px;background:#3a3a3a"></div>
<div class="a" style="left:963px;top:84px;width:112px;height:18px;background:#c4c4c4;border-radius:2px"></div>
<div class="t" style="left:968px;top:86px;color:#8d8d8d">Search Details</div>
<div class="a" style="left:1084px;top:82px;width:26px;height:22px;background:linear-gradient(#e0e0e0,#b8b8b8);border-radius:2px"></div>
<div class="a" style="left:961px;top:105px;width:186px;height:484px;background:#3c3c3c"></div>
<div class="a" style="left:1020px;top:105px;width:1px;height:484px;background:#2c2c2c"></div>
<div class="a" style="left:961px;top:105px;width:186px;height:29px;background:#303030;border-radius:2px 2px 0 0"></div>
<div class="a" style="left:1020px;top:105px;width:1px;height:29px;background:#2a2a2a"></div>
<div class="t sh" style="left:975px;top:113px;color:#e6e6e6;font-weight:bold">Actor Tick</div>
<div class="t" style="left:977px;top:139px;color:#d4d4d4;width:43px;overflow:hidden;font-size:11px">Start with Tick</div>
<div class="a" style="left:1025px;top:139px;width:14px;height:14px;background:#dcdcdc;border-radius:2px;box-shadow:inset 0 0 0 1px rgba(255,255,255,.18)"></div>
<div class="t" style="left:977px;top:163px;color:#d4d4d4;width:43px;overflow:hidden;font-size:11px">Tick Interval</div>
<div class="a" style="left:1024px;top:162px;width:85px;height:17px;background:#d9d9d9;border-radius:3px"></div>
<div class="t" style="left:1028px;top:163px;color:#111;font-size:10.7px">0,0</div>
<div class="t" style="left:977px;top:187px;color:#d4d4d4;width:43px;overflow:hidden;font-size:11px">Allow Tick</div>
<div class="a" style="left:1025px;top:187px;width:14px;height:14px;background:#adadad;border-radius:2px;box-shadow:inset 0 0 0 1px rgba(255,255,255,.18)"></div>
<div class="a" style="left:961px;top:209px;width:186px;height:13px;background:#474543"></div>
<div class="a" style="left:961px;top:222px;width:186px;height:29px;background:#303030;border-radius:2px 2px 0 0"></div>
<div class="a" style="left:1020px;top:222px;width:1px;height:29px;background:#2a2a2a"></div>
<div class="t sh" style="left:975px;top:230px;color:#e6e6e6;font-weight:bold">Replication</div>
<div class="t" style="left:977px;top:256px;color:#d4d4d4;width:43px;overflow:hidden;font-size:11px">Only Rel</div>
<div class="a" style="left:1025px;top:256px;width:14px;height:14px;background:#adadad;border-radius:2px;box-shadow:inset 0 0 0 1px rgba(255,255,255,.18)"></div>
<div class="t" style="left:977px;top:280px;color:#d4d4d4;width:43px;overflow:hidden;font-size:11px">Always F</div>
<div class="a" style="left:1025px;top:280px;width:14px;height:14px;background:#adadad;border-radius:2px;box-shadow:inset 0 0 0 1px rgba(255,255,255,.18)"></div>
<div class="t" style="left:977px;top:304px;color:#d4d4d4;width:43px;overflow:hidden;font-size:11px">Replicate</div>
<div class="a" style="left:1025px;top:304px;width:14px;height:14px;background:#adadad;border-radius:2px;box-shadow:inset 0 0 0 1px rgba(255,255,255,.18)"></div>
<div class="t" style="left:977px;top:328px;color:#d4d4d4;width:43px;overflow:hidden;font-size:11px">Net Load</div>
<div class="a" style="left:1025px;top:328px;width:14px;height:14px;background:#dcdcdc;border-radius:2px;box-shadow:inset 0 0 0 1px rgba(255,255,255,.18)"></div>
<div class="t" style="left:977px;top:352px;color:#d4d4d4;width:43px;overflow:hidden;font-size:11px">Net Use</div>
<div class="a" style="left:1025px;top:352px;width:14px;height:14px;background:#adadad;border-radius:2px;box-shadow:inset 0 0 0 1px rgba(255,255,255,.18)"></div>
<div class="t" style="left:977px;top:376px;color:#d4d4d4;width:43px;overflow:hidden;font-size:11px">Replay R</div>
<div class="a" style="left:1025px;top:376px;width:14px;height:14px;background:#adadad;border-radius:2px;box-shadow:inset 0 0 0 1px rgba(255,255,255,.18)"></div>
<div class="t" style="left:977px;top:400px;color:#d4d4d4;width:43px;overflow:hidden;font-size:11px">Replicate</div>
<div class="a" style="left:1025px;top:400px;width:14px;height:14px;background:#adadad;border-radius:2px;box-shadow:inset 0 0 0 1px rgba(255,255,255,.18)"></div>
<div class="t" style="left:977px;top:425px;color:#d4d4d4;width:43px;overflow:hidden;font-size:11px">Net Dorm</div>
<div class="a" style="left:1024px;top:423px;width:84px;height:19px;background:linear-gradient(#eeeeee,#c8c8c8);border:1px solid #555;border-radius:2px"></div>
<div class="t" style="left:1030px;top:425px;color:#111;font-size:10.7px">Awake</div>
<div class="t" style="left:977px;top:450px;color:#d4d4d4;width:43px;overflow:hidden;font-size:11px">Net Cull</div>
<div class="a" style="left:1024px;top:449px;width:85px;height:17px;background:#d9d9d9;border-radius:3px"></div>
<div class="t" style="left:1028px;top:450px;color:#111;font-size:10.7px">225000000,0</div>
<div class="t" style="left:977px;top:474px;color:#d4d4d4;width:43px;overflow:hidden;font-size:11px">Net Upda</div>
<div class="a" style="left:1024px;top:473px;width:85px;height:17px;background:#d9d9d9;border-radius:3px"></div>
<div class="t" style="left:1028px;top:474px;color:#111;font-size:10.7px">100,0</div>
<div class="t" style="left:977px;top:498px;color:#d4d4d4;width:43px;overflow:hidden;font-size:11px">Min Net</div>
<div class="a" style="left:1024px;top:497px;width:85px;height:17px;background:#d9d9d9;border-radius:3px"></div>
<div class="t" style="left:1028px;top:498px;color:#111;font-size:10.7px">2,0</div>
<div class="t" style="left:977px;top:522px;color:#d4d4d4;width:43px;overflow:hidden;font-size:11px">Net Prior</div>
<div class="a" style="left:1024px;top:521px;width:85px;height:17px;background:#d9d9d9;border-radius:3px"></div>
<div class="t" style="left:1028px;top:522px;color:#111;font-size:10.7px">1,0</div>
<div class="a" style="left:961px;top:544px;width:186px;height:13px;background:#474543"></div>
<div class="a" style="left:961px;top:557px;width:186px;height:29px;background:#303030;border-radius:2px 2px 0 0"></div>
<div class="a" style="left:1020px;top:557px;width:1px;height:29px;background:#2a2a2a"></div>
<div class="t sh" style="left:975px;top:565px;color:#e6e6e6;font-weight:bold">Rendering</div>
<div class="a" style="left:959px;top:586px;width:190px;height:3px;background:#2e2e2e"></div>
<div class="a" style="left:1139px;top:486px;width:1px;height:103px;background:#4c4c4c"></div>
<div class="a" style="left:1133px;top:107px;width:12px;height:380px;background:#fdfdfd;border:1px solid #111;border-radius:3px"></div>
<svg class="a" style="left:0;top:0" width="1153" height="589"><defs><linearGradient id="gblue" x1="0" y1="0" x2="0" y2="1"><stop offset="0" stop-color="#b9c9ea"/><stop offset="1" stop-color="#6f8fcf"/></linearGradient><linearGradient id="gpale" x1="0" y1="0" x2="1" y2="1"><stop offset="0" stop-color="#eef2fa"/><stop offset="1" stop-color="#9fb2dc"/></linearGradient><radialGradient id="gball" cx="0.38" cy="0.32" r="0.7"><stop offset="0" stop-color="#ffffff"/><stop offset="0.55" stop-color="#d8dde6"/><stop offset="1" stop-color="#7c8596"/></radialGradient><radialGradient id="gsph" cx="0.4" cy="0.35" r="0.7"><stop offset="0" stop-color="#ffffff"/><stop offset="0.6" stop-color="#cccccc"/><stop offset="1" stop-color="#555"/></radialGradient><radialGradient id="gglass" cx="0.35" cy="0.3" r="0.75"><stop offset="0" stop-color="#f4f4f4"/><stop offset="0.45" stop-color="#9a9a9a"/><stop offset="0.5" stop-color="#3a3a3a"/><stop offset="1" stop-color="#0a0a0a"/></radialGradient><radialGradient id="gshadow" cx="0.5" cy="0.5" r="0.5"><stop offset="0" stop-color="#000" stop-opacity="0.85"/><stop offset="1" stop-color="#000" stop-opacity="0"/></radialGradient></defs><ellipse cx="214" cy="97" rx="16" ry="3.5" fill="url(#gshadow)"/><path d="M210.39 70.42 L212.59 71.20 L212.06 73.81 L209.73 73.68 L208.54 75.45 L209.54 77.55 L207.32 79.02 L205.77 77.29 L203.68 77.69 L202.90 79.89 L200.29 79.36 L200.42 77.03 L198.65 75.84 L196.55 76.84 L195.08 74.62 L196.81 73.07 L196.41 70.98 L194.21 70.20 L194.74 67.59 L197.07 67.72 L198.26 65.95 L197.26 63.85 L199.48 62.38 L201.03 64.11 L203.12 63.71 L203.90 61.51 L206.51 62.04 L206.38 64.37 L208.15 65.56 L210.25 64.56 L211.72 66.78 L209.99 68.33Z" fill="url(#gpale)"/><circle cx="203.4" cy="70.7" r="2.8" fill="#3a3a3a"/><path d="M225.21 84.98 L227.99 85.68 L227.66 88.99 L224.80 89.13 L223.53 91.50 L224.99 93.96 L222.41 96.06 L220.29 94.14 L217.72 94.91 L217.02 97.69 L213.71 97.36 L213.57 94.50 L211.20 93.23 L208.74 94.69 L206.64 92.11 L208.56 89.99 L207.79 87.42 L205.01 86.72 L205.34 83.41 L208.20 83.27 L209.47 80.90 L208.01 78.44 L210.59 76.34 L212.71 78.26 L215.28 77.49 L215.98 74.71 L219.29 75.04 L219.43 77.90 L221.80 79.17 L224.26 77.71 L226.36 80.29 L224.44 82.41Z" fill="#8ea5d9"/><circle cx="216.5" cy="86.2" r="3.6" fill="#3a3a3a"/><path d="M189 88 L196 96 L214 71" fill="none" stroke="#1c1c1c" stroke-width="7" stroke-linejoin="miter" opacity=".55" transform="translate(1.5,1)"/><path d="M189.5 87.5 L196 95 L214 71" fill="none" stroke="#5fac6c" stroke-width="5.5" stroke-linejoin="miter"/><path d="M246 86 L254 86 L250 90Z" fill="#bdbdbd"/><ellipse cx="310" cy="97" rx="14" ry="3" fill="url(#gshadow)"/><rect x="291" y="64" width="31" height="33" rx="1.5" fill="#6e8fd0"/><rect x="294.5" y="64" width="24" height="19.5" fill="url(#gpale)"/><rect x="294.5" y="64" width="24" height="19.5" fill="#f4f6fb" opacity=".7"/><rect x="297.5" y="85.5" width="16" height="11.5" fill="#e6eaf3"/><rect x="299.5" y="86.5" width="4" height="8" fill="#6e8fd0"/><circle cx="292.6" cy="66.2" r=".9" fill="#222"/><circle cx="320" cy="66.2" r=".9" fill="#222"/><ellipse cx="366" cy="92" rx="13" ry="4" fill="url(#gshadow)"/><path d="M346 70 L357 68 L377 68 L377 88 L346 88Z" fill="#7b9bd8"/><line x1="341" y1="96.5" x2="352" y2="87" stroke="#7b9bd8" stroke-width="3" stroke-linecap="round"/><circle cx="362.5" cy="76.8" r="13.2" fill="url(#gglass)" stroke="#e4ebf7" stroke-width="2"/><ellipse cx="433" cy="93" rx="15" ry="4" fill="url(#gshadow)"/><path d="M423 77 L432 72 L434 85 L425 89Z" fill="#5f7cb8"/><path d="M410.5 76.5 L421 73.5 L426 90.5 L413.5 94.5Z" fill="#86a3dc"/><path d="M414 76 L418 75 L422.5 91.5 L418 93Z" fill="#a9c0ea" opacity=".6"/><ellipse cx="415.6" cy="75" rx="5.3" ry="2.4" transform="rotate(-16 415.6 75)" fill="#eef1f7"/><path d="M431 67.5 L445.5 63.5 L447.5 80.5 L436 84.5Z" fill="#8eaae0"/><path d="M435 67 L440 65.5 L442.5 82 L438 83.5Z" fill="#b4c8ee" opacity=".6"/><ellipse cx="438.2" cy="65.2" rx="7.2" ry="2.5" transform="rotate(-16 438.2 65.2)" fill="#eef1f7"/><ellipse cx="423.5" cy="93.5" rx="4" ry="3" fill="#e8ebf2" stroke="#555" stroke-width=".7"/><ellipse cx="423.5" cy="94.2" rx="2" ry="1.3" fill="#555"/><ellipse cx="436.5" cy="89" rx="4" ry="3" fill="#e8ebf2" stroke="#555" stroke-width=".7"/><ellipse cx="436.5" cy="89.7" rx="2" ry="1.3" fill="#555"/><ellipse cx="517" cy="91.5" rx="7" ry="3" fill="url(#gshadow)"/><path d="M492 93 C504 93 501 70 510 68" fill="none" stroke="#d5def0" stroke-width="2.4"/><path d="M509 64.5 L514 68 L509 71.5Z" fill="#d5def0"/><path d="M493 95 C500 94 504 86 511 85" fill="none" stroke="#6a88c0" stroke-width="1.4"/><circle cx="487.7" cy="92.7" r="5.2" fill="url(#gball)"/><circle cx="516.4" cy="67.8" r="5.2" fill="url(#gball)"/><circle cx="515" cy="84.5" r="3" fill="#5f7fb8"/><path d="M560 86.5 L568.5 86.5 L564.25 90.5Z" fill="#bdbdbd"/><ellipse cx="645" cy="95" rx="15" ry="3" fill="url(#gshadow)"/><path d="M636 65 L660 62.5 L660 93 L636 95.5Z" fill="url(#gblue)"/><path d="M640 66 L658 64 L658 90 L640 92Z" fill="#d4def2" opacity=".8"/><path d="M644 66 V92 M649 65 V91 M654 64.5 V90.5 M640 71 L658 69 M640 76 L658 74 M640 81 L658 79" stroke="#8fa6d6" stroke-width="1"/><ellipse cx="636" cy="96" rx="12" ry="2.5" fill="#000" opacity=".5"/><path d="M643.82 84.28 L646.48 86.27 L643.45 91.82 L640.33 90.65 L637.75 92.23 L637.36 95.53 L631.03 95.68 L630.49 92.40 L627.83 90.95 L624.78 92.26 L621.48 86.86 L624.05 84.75 L623.98 81.72 L621.32 79.73 L624.35 74.18 L627.47 75.35 L630.05 73.77 L630.44 70.47 L636.77 70.32 L637.31 73.60 L639.97 75.05 L643.02 73.74 L646.32 79.14 L643.75 81.25Z" fill="#f6f6f6"/><circle cx="633.9" cy="83" r="3.6" fill="#2a2a2a"/><ellipse cx="738" cy="95" rx="18" ry="3" fill="#000" opacity=".25"/><path d="M724 65 L736 66 L737 69 L755 71 L752 96 L719 90 L717 69Z" fill="#7396d4"/><path d="M738 71 L754 73 L752 94 L735 91Z" fill="#a9bde6"/><rect x="718.5" y="70" width="15" height="4.5" fill="#f2f2f2"/><rect x="718.5" y="77" width="15" height="4.5" fill="#f2f2f2"/><rect x="718.5" y="84" width="15" height="4.5" fill="#f2f2f2"/><path d="M735 83 L741 90 L753 73" fill="none" stroke="#333" stroke-width="4.5"/><path d="M735 83 L741 90 L753 73" fill="none" stroke="#fafafa" stroke-width="2.6"/><ellipse cx="824" cy="96" rx="15" ry="4" fill="url(#gshadow)"/><path d="M834.60 81.92 L838.18 84.32 L836.26 89.00 L832.03 88.19 L828.55 91.68 L829.39 95.90 L824.72 97.85 L822.30 94.29 L817.38 94.30 L814.98 97.88 L810.30 95.96 L811.11 91.73 L807.62 88.25 L803.40 89.09 L801.45 84.42 L805.01 82.00 L805.00 77.08 L801.42 74.68 L803.34 70.00 L807.57 70.81 L811.05 67.32 L810.21 63.10 L814.88 61.15 L817.30 64.71 L822.22 64.70 L824.62 61.12 L829.30 63.04 L828.49 67.27 L831.98 70.75 L836.20 69.91 L838.15 74.58 L834.59 77.00Z" fill="#6f93d2"/><circle cx="819.8" cy="79.5" r="13" fill="#7c9cd6"/><rect x="810" y="69" width="6" height="22" fill="#eef2f8"/><path d="M817 69.5 L837 80 L817 90.5Z" fill="#e6ecf6"/><path d="M882 98 L915 96 L894 92Z" fill="#111" opacity=".8"/><path d="M882.5 61.5 L914 80 L882.5 98.5Z" fill="#c6d4eb"/><path d="M882.5 80 L914 80 L882.5 98.5Z" fill="#b5c5e2"/><path d="M935 81 L941.5 87.5 L935 94 M942 81 L948.5 87.5 L942 94" fill="none" stroke="#f4f4f4" stroke-width="1.7"/><g fill="#000" opacity=".6"><rect x="190" y="130" width="6" height="6"/><rect x="198" y="130" width="6" height="6"/><rect x="190" y="137.5" width="6" height="6"/><rect x="198" y="137.5" width="6" height="6"/></g><rect x="189" y="129" width="6" height="6" fill="#7e9ed9"/><rect x="197" y="129" width="5.5" height="6" fill="#f0f0f0"/><rect x="189" y="136.5" width="6" height="6" fill="#6f92d6"/><rect x="197" y="136.5" width="5.5" height="6" fill="#6f92d6"/><defs><linearGradient id="gf" x1="0" y1="0" x2="0" y2="1"><stop offset="0" stop-color="#f4f6fb"/><stop offset="1" stop-color="#7e9edc"/></linearGradient></defs><path d="M340 142.8 Q344 145 345.6 138.5 L347.6 131.5 Q349 127.6 353 128.6" fill="none" stroke="url(#gf)" stroke-width="2.2"/><path d="M343.8 134.2 H350.5" stroke="#d0dcf2" stroke-width="1.2"/><rect x="494" y="129" width="5" height="4.5" fill="#86a4dc"/><rect x="500.5" y="129" width="5.5" height="4.5" fill="#86a4dc"/><rect x="490" y="135" width="8" height="6.5" fill="#7698d6"/><rect x="500.5" y="136" width="5.5" height="4.5" fill="#7698d6"/><path d="M527.5 141 L527.5 156 L531 152.5 L534 159 L536.5 158 L533.5 151.5 L538.5 151.5Z" fill="#fff" stroke="#000" stroke-width="1"/><path d="M190.7 163 L199.3 163 L195 167.2Z" fill="#000"/><path d="M217 166 L226 160 L233 162 L232 166 L223 171 L218 169Z" fill="#4f82dc"/><path d="M222 162 L227 159.5 L232 161 L227 164Z" fill="#a9c2ee"/><path d="M316 162 L324 157.5 L332 161 L332 169 L324 173 L316 168Z" fill="#5588e0"/><path d="M316 162 L324 166 L324 173 L316 168Z" fill="#2a2a2a"/><path d="M316 162 L324 157.5 L332 161 L324 165.5Z" fill="#8fb0ea"/><g fill="#000"><path d="M584.8 156.5 L588 160 L581.6 160Z"/><path d="M584.8 173 L588 169.5 L581.6 169.5Z"/><path d="M576.5 165 L580 161.8 L580 168.2Z"/><path d="M593 165 L589.5 161.8 L589.5 168.2Z"/></g><circle cx="584.8" cy="165" r="4.3" fill="#5a8ae0"/><path d="M605 159.5 A6.3 6.3 0 1 0 614 160" fill="none" stroke="#000" stroke-width="1.6"/><path d="M612 157 L616.5 159 L612.5 162Z" fill="#000"/><circle cx="609.1" cy="165.3" r="4.3" fill="#5a8ae0"/><path d="M625 172.5 L625 167 L630.5 172.5Z M641 157.5 L641 163 L635.5 157.5Z" fill="#000"/><line x1="627" y1="170.5" x2="639" y2="159.5" stroke="#000" stroke-width="1.8"/><circle cx="633" cy="165" r="4" fill="#5a8ae0"/><path d="M652 162 L660 158 L669 161 L669 169 L660 173 L652 170Z" fill="#8a8a8a"/><path d="M652 162 L660 165.5 L660 173 L652 170Z" fill="#5a5a5a"/><path d="M652 162 L660 158 L669 161 L660 165Z" fill="#000"/><path d="M683 167 Q689 163 695 170 M689 167 L694.5 161.5" fill="none" stroke="#111" stroke-width="1.3"/><path d="M694.5 159.5 L696 163.5 L692 162Z" fill="#111"/><path d="M683.5 166 V157.5 M686 165 V158 M687.5 165 L690 158" stroke="#777" stroke-width=".9" fill="none"/><path d="M686 171.5 L690 171.5 L688 173.5Z" fill="#000"/><rect x="705" y="159" width="13" height="13" fill="#000"/><rect x="706" y="160" width="2" height="2" fill="#e08a14"/><rect x="706" y="163" width="2" height="2" fill="#e08a14"/><rect x="706" y="166" width="2" height="2" fill="#e08a14"/><rect x="706" y="169" width="2" height="2" fill="#e08a14"/><rect x="709" y="160" width="2" height="2" fill="#e08a14"/><rect x="709" y="163" width="2" height="2" fill="#e08a14"/><rect x="709" y="166" width="2" height="2" fill="#e08a14"/><rect x="709" y="169" width="2" height="2" fill="#e08a14"/><rect x="712" y="160" width="2" height="2" fill="#e08a14"/><rect x="712" y="163" width="2" height="2" fill="#e08a14"/><rect x="712" y="166" width="2" height="2" fill="#e08a14"/><rect x="712" y="169" width="2" height="2" fill="#e08a14"/><rect x="715" y="160" width="2" height="2" fill="#e08a14"/><rect x="715" y="163" width="2" height="2" fill="#e08a14"/><rect x="715" y="166" width="2" height="2" fill="#e08a14"/><rect x="715" y="169" width="2" height="2" fill="#e08a14"/><path d="M738.8 171 L743.2 171 L741 173.2Z" fill="#000"/><path d="M801.8 171 L806.2 171 L804 173.2Z" fill="#000"/><path d="M871.8 171 L876.2 171 L874 173.2Z" fill="#000"/><path d="M932.8 171 L937.2 171 L935 173.2Z" fill="#000"/><path d="M766 171.5 L772 158 L779 171.5Z" fill="none" stroke="#000" stroke-width="1.1"/><path d="M773 160.5 Q778 163 778 168" fill="none" stroke="#000" stroke-width="1.1"/><path d="M776.5 167 L779.5 167 L778 169.5Z M772 159 L775 159.5 L773 162Z" fill="#000"/><rect x="833.5" y="168" width="3.5" height="3.5" fill="#000"/><line x1="836" y1="169" x2="843" y2="162" stroke="#000" stroke-width="1.8"/><path d="M845.5 159.5 L845.5 166 L839 159.5Z" fill="#000"/><path d="M907 161 H913 M906 164 H913 M906 167 H913 M907 170 H913" stroke="#666" stroke-width="1"/><circle cx="915.5" cy="162.5" r="2.3" fill="none" stroke="#000" stroke-width="1.3"/><circle cx="920" cy="162.5" r="2.3" fill="none" stroke="#000" stroke-width="1.3"/><rect x="913" y="165" width="8" height="5" fill="#000"/><path d="M921 166.5 L923.5 165 L923.5 170 L921 169Z" fill="#000"/><circle cx="20" cy="66" r="4" fill="url(#gsph)"/><path d="M14 64 V61 L17 60 M26 64 V61 L23 60" fill="none" stroke="#5f86c8" stroke-width="1"/><path d="M12 69.5 L16 68 L16 71Z M28 69.5 L24 68 L24 71Z M18 72 L22 72 L20 74.5Z" fill="#f2f2f2"/><circle cx="14.2" cy="121.8" r="7" fill="url(#gsph)"/><ellipse cx="15" cy="129" rx="5" ry="1.5" fill="#000" opacity=".5"/><circle cx="33" cy="146.5" r="6.2" fill="url(#gsph)"/><circle cx="38.3" cy="152" r="3.6" fill="#fafafa" stroke="#666" stroke-width=".5"/><path d="M13 258 L19 256.5 L26 258 L26 267 L19 266 L13 267Z" fill="#dcdcdc"/><path d="M19 257 V266" stroke="#999" stroke-width=".8"/><ellipse cx="19" cy="268" rx="6" ry="1.5" fill="#000" opacity=".6"/><circle cx="119" cy="292" r="5" fill="none" stroke="#000" stroke-width="2.2"/><line x1="115" y1="296.5" x2="111.5" y2="300" stroke="#000" stroke-width="2.6" stroke-linecap="round"/><circle cx="168" cy="96" r="5.5" fill="none" stroke="#000" stroke-width="2.2"/><line x1="164" y1="100.5" x2="161.5" y2="104" stroke="#000" stroke-width="2.6" stroke-linecap="round"/><circle cx="1067.4" cy="91.8" r="5.3" fill="none" stroke="#000" stroke-width="2.2"/><line x1="1063.5" y1="96" x2="1060.5" y2="99.5" stroke="#000" stroke-width="2.6" stroke-linecap="round"/><path d="M132.5 292.5 Q141.5 283.5 150.5 292.5 Q141.5 301.5 132.5 292.5Z" fill="#c8c8c8"/><circle cx="141.5" cy="292.5" r="3.6" fill="#4f6fa8"/><circle cx="141.5" cy="292.5" r="1.3" fill="#c8d0e0"/><path d="M1113.8 93.2 Q1122.8 84.2 1131.8 93.2 Q1122.8 102.2 1113.8 93.2Z" fill="#c8c8c8"/><circle cx="1122.8" cy="93.2" r="3.6" fill="#4f6fa8"/><circle cx="1122.8" cy="93.2" r="1.3" fill="#c8d0e0"/><path d="M154 291 L162 291 L158 295Z M1135 91 L1143.5 91 L1139.2 95Z" fill="#c8c8c8"/><path d="M20.5 90 V101 M15 95.5 H26" stroke="#000" stroke-width="3" opacity=".5" transform="translate(1,1)"/><path d="M20.5 90 V101 M15 95.5 H26" stroke="#fff" stroke-width="2.8"/><path d="M16.5 287.5 V298.5 M11 293 H22" stroke="#fff" stroke-width="2.8"/><path d="M138.2 95 L146 95 L142.1 99.5Z" fill="#fff"/><path d="M77 290.5 L86 290.5 L81.5 295Z" fill="#fff"/><path d="M5 327 L12 320 L12 327Z" fill="#a0a0a0"/><path d="M5 349 L12 342 L12 349Z" fill="#a0a0a0"/><path d="M5 436 L12 429 L12 436Z" fill="#a0a0a0"/><path d="M5 508 L12 501 L12 508Z" fill="#a0a0a0"/><path d="M5 528 L12 521 L12 528Z" fill="#a0a0a0"/><path d="M963.5 123 L970.5 116 L970.5 123Z" fill="#a0a0a0"/><path d="M963.5 240 L970.5 233 L970.5 240Z" fill="#a0a0a0"/><path d="M963.5 575 L970.5 568 L970.5 575Z" fill="#a0a0a0"/><path d="M159 319.5 V330.5 M153.5 325 H164.5" stroke="#fff" stroke-width="2.6"/><path d="M159 425.5 V436.5 M153.5 431 H164.5" stroke="#fff" stroke-width="2.6"/><path d="M159 471.5 V482.5 M153.5 477 H164.5" stroke="#fff" stroke-width="2.6"/><path d="M159 497.5 V508.5 M153.5 503 H164.5" stroke="#fff" stroke-width="2.6"/><path d="M159 561.5 V572.5 M153.5 567 H164.5" stroke="#fff" stroke-width="2.6"/><rect x="19" y="340.5" width="5" height="4" fill="#86a4dc"/><rect x="25" y="340.5" width="5" height="4" fill="#86a4dc"/><rect x="14" y="346" width="9" height="6.5" fill="#7698d6"/><rect x="25" y="347" width="5" height="4" fill="#7698d6"/><path d="M32 359.8 Q32.4 359.8 32.8 360.2 L39 366.6 Q39.3 367 39 367.4 L32.8 373.8 Q32.4 374.2 32 374.2 Q31.6 374.2 31.2 373.8 L25 367.4 Q24.7 367 25 366.6 L31.2 360.2 Q31.6 359.8 32 359.8Z" fill="#f4f4f4"/><path d="M31.5 362.5 L32.1 362 L37 367 L32.1 371.8 L31.5 371.3 L31.5 369.3 L28.9 369.3 L28.9 364.6 L31.5 364.6Z" fill="#3a3a3a"/><path d="M32 379.8 Q32.4 379.8 32.8 380.2 L39 386.6 Q39.3 387 39 387.4 L32.8 393.8 Q32.4 394.2 32 394.2 Q31.6 394.2 31.2 393.8 L25 387.4 Q24.7 387 25 386.6 L31.2 380.2 Q31.6 379.8 32 379.8Z" fill="#f4f4f4"/><path d="M31.5 382.5 L32.1 382 L37 387 L32.1 391.8 L31.5 391.3 L31.5 389.3 L28.9 389.3 L28.9 384.6 L31.5 384.6Z" fill="#3a3a3a"/><path d="M32 399.8 Q32.4 399.8 32.8 400.2 L39 406.6 Q39.3 407 39 407.4 L32.8 413.8 Q32.4 414.2 32 414.2 Q31.6 414.2 31.2 413.8 L25 407.4 Q24.7 407 25 406.6 L31.2 400.2 Q31.6 399.8 32 399.8Z" fill="#f4f4f4"/><path d="M31.5 402.5 L32.1 402 L37 407 L32.1 411.8 L31.5 411.3 L31.5 409.3 L28.9 409.3 L28.9 404.6 L31.5 404.6Z" fill="#3a3a3a"/><path d="M14 452 Q15 446 21 447 L21 444.5 L25 448.5 L21 452.5 L21 450 Q17 449.5 14 453Z" fill="#d0d8e8"/><path d="M20.5 460.3 Q23.8 461.8 25 456.5 L26.6 451.5 Q27.8 448.4 30.5 449.3" fill="none" stroke="#8eaae0" stroke-width="1.7"/><path d="M23.8 453.2 H28.6" stroke="#8eaae0" stroke-width="1"/><circle cx="30.6" cy="541.5" r="6.5" fill="#5f82be"/><circle cx="31" cy="541" r="3.5" fill="#4a80d8"/><circle cx="36.5" cy="546.3" r="3.8" fill="#4a80d8" stroke="#333" stroke-width=".6"/><line x1="979" y1="70" x2="984.5" y2="74.7" stroke="#4a80d8" stroke-width="1.6"/><circle cx="975.5" cy="66.2" r="6.3" fill="#555" stroke="#4a80d8" stroke-width="1"/><text x="973" y="70.5" font-family="Liberation Serif" font-weight="bold" font-size="10" fill="#f0f0f0">i</text><path d="M1091 87.5 h2 M1094 87.5 h4 M1099.5 87.5 h5" stroke="#707070" stroke-width="1.6"/><path d="M1091 90.5 h2 M1094 90.5 h4 M1099.5 90.5 h5" stroke="#707070" stroke-width="1.6"/><path d="M1091 93.5 h2 M1094 93.5 h4 M1099.5 93.5 h5" stroke="#707070" stroke-width="1.6"/><path d="M1091 96.5 h2 M1094 96.5 h4 M1099.5 96.5 h5" stroke="#707070" stroke-width="1.6"/><path d="M1091 99.5 h2 M1094 99.5 h4 M1099.5 99.5 h5" stroke="#707070" stroke-width="1.6"/><path d="M1027.6 146.3 L1030.6 149.3 L1036.6 142.6" fill="none" stroke="#5a5a5a" stroke-width="2.8"/><path d="M1027.6 335.3 L1030.6 338.3 L1036.6 331.6" fill="none" stroke="#5a5a5a" stroke-width="2.8"/><path d="M1098.2 166 L1103 166 L1103 171Z M1095 169.5 L1095 174 L1099.7 174Z" fill="#000"/><path d="M1098.2 453 L1103 453 L1103 458Z M1095 456.5 L1095 461 L1099.7 461Z" fill="#000"/><path d="M1098.2 477 L1103 477 L1103 482Z M1095 480.5 L1095 485 L1099.7 485Z" fill="#000"/><path d="M1098.2 501 L1103 501 L1103 506Z M1095 504.5 L1095 509 L1099.7 509Z" fill="#000"/><path d="M1098.2 525 L1103 525 L1103 530Z M1095 528.5 L1095 533 L1099.7 533Z" fill="#000"/><path d="M1092 429 L1101 429 L1096.5 434Z" fill="#000"/><path d="M1040.5 212 H1051.5 M1040.5 214.5 L1051.5 214.5 L1046 219Z" stroke="#e8e8e8" fill="#e8e8e8" stroke-width="1.2"/><path d="M1040.5 547 H1051.5 M1040.5 549.5 L1051.5 549.5 L1046 554Z" stroke="#e8e8e8" fill="#e8e8e8" stroke-width="1.2"/></svg>
</body></html>
